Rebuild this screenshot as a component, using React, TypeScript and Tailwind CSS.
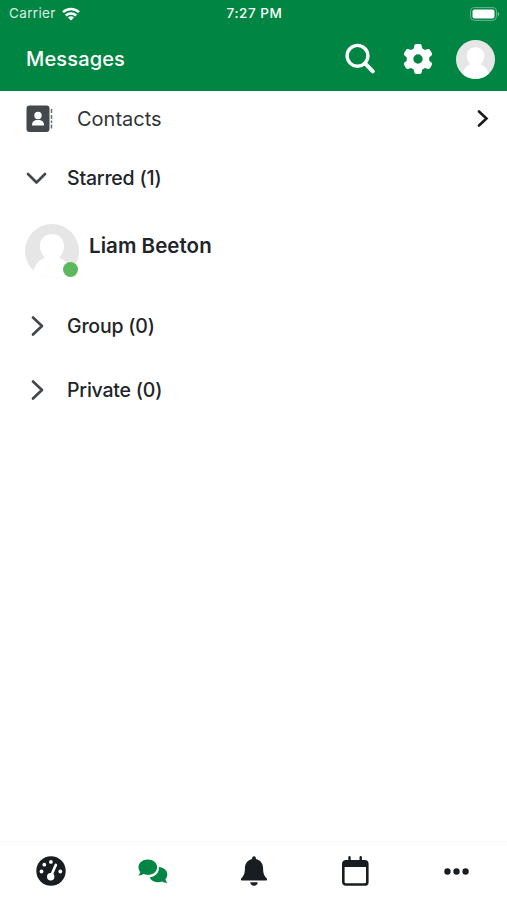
import { ReactNode } from "react";
import { FaEllipsis, FaGear } from "react-icons/fa6";

interface SectionProps {
  title: string;
  open?: boolean;
}

const StatusBar = () => {
  return (
    <div className="flex h-[27px] items-center justify-between pl-[9px] pr-[7px]">
      <div className="flex w-[180px] items-center gap-[6px]">
        <span className="text-[13.5px] leading-none tracking-[0.35px] opacity-85">Carrier</span>
        <svg width="18" height="14" viewBox="0 0 18 14" fill="none" stroke="currentColor" strokeWidth="2.5">
          <path d="M1 5.1a11.6 11.6 0 0 1 16 0" />
          <path d="M3.8 8.5a7.5 7.5 0 0 1 10.4 0" />
          <path d="M9 13.6 5.900 10.600a4.500 4.500 0 0 1 6.200 0z" fill="currentColor" stroke="none" />
        </svg>
      </div>
      <span className="text-[13.5px] font-medium leading-none tracking-[0.55px]">7:27 PM</span>
      <div className="flex w-[180px] justify-end">
        <svg width="31" height="14" viewBox="0 0 31 14">
          <rect x="1.5" y="0.6" width="26" height="12.8" rx="4" fill="none" stroke="#fff" strokeOpacity="0.4" />
          <rect x="3.5" y="2.5" width="22" height="9" rx="2" fill="#fff" />
          <path d="M28.8 5v4.2a2.3 2.3 0 0 0 0-4.2z" fill="#fff" fillOpacity="0.5" />
        </svg>
      </div>
    </div>
  );
}

const Avatar = ({ className }: { className: string }) => {
  return (
    <svg className={className} viewBox="0 0 54 54">
      <defs>
        <clipPath id="avatar">
          <circle cx="27" cy="27" r="27" />
        </clipPath>
      </defs>
      <g clipPath="url(#avatar)">
        <rect width="54" height="54" fill="#e6e6e6" />
        <path
          d="M27 10c-7.500 0-12 5-12 12 0 5 2 9 5 11.500C14 35.500 10 41 7.500 49v5h39v-5C44 41 40 35.500 34 33.500c3-2.500 5-6.500 5-11.500 0-7-4.500-12-12-12z"
          fill="#fff"
        />
      </g>
    </svg>
  );
}

const Section = ({ title, open }: SectionProps) => {
  return (
    <div className="flex h-16 items-center pl-[25px]">
      <svg
        className="text-[#44484c]"
        width="24"
        height="24"
        viewBox="0 0 24 24"
        fill="none"
        stroke="currentColor"
        strokeWidth="2.7"
        strokeLinecap="round"
        strokeLinejoin="round"
      >
        {open ? <path d="M3 8l8.500 8.500L20 8" /> : <path d="M8 3.500l9 8.500-9 8.500" />}
      </svg>
      <span className="ml-[18px] pt-[2px] text-[19.5px] font-medium tracking-[-0.2px] text-[#212529]">{title}</span>
    </div>
  );
}

const GaugeIcon = () => {
  return (
    <svg width="30" height="30" viewBox="0 0 30 30">
      <circle cx="15" cy="15" r="14.700" fill="currentColor" />
      <g fill="#fff">
        <circle cx="5.500" cy="15.500" r="1.900" />
        <circle cx="8.300" cy="8.700" r="1.900" />
        <circle cx="14.900" cy="5.900" r="1.900" />
        <circle cx="24.300" cy="15.500" r="1.900" />
        <circle cx="14.700" cy="20.700" r="3.700" />
      </g>
      <path d="M15.200 19.500l4.600-10.500" stroke="#fff" strokeWidth="2.700" strokeLinecap="round" />
    </svg>
  );
}

const ChatIcon = () => {
  return (
    <svg className="ml-[1px]" width="30" height="25" viewBox="0 0 30 25" fill="currentColor">
      <path d="M9.800 0.500c5.200 0 9.300 3.300 9.300 7.700s-4.100 7.700-9.300 7.700c-1.600 0-3-.3-4.300-.8-1.500 1-3.300 1.500-5.200 1.300 1-1 1.800-2.200 2-3.500C1 11.500.5 10 .5 8.200.5 3.800 4.600.5 9.800.5z" />
      <path d="M20.800 8c4.800.3 8.500 3.300 8.500 7.500 0 1.800-.7 3.400-1.900 4.700.3 1.500 1 2.500 2 3.600-1.900.2-3.700-.3-5.200-1.300-1.300.5-2.600.8-4 .8-3.900 0-7.200-2-8.600-4.900 5.200-.5 9.300-4.400 9.300-9.200z" />
    </svg>
  );
}

const BellIcon = () => {
  return (
    <svg width="28" height="30" viewBox="0 0 28 30" fill="currentColor">
      <path d="M14 .3c1.100 0 1.900.8 1.900 1.900v.9c4.300.9 7.200 4.400 7.200 9.100 0 5.400 1.300 7.700 3.600 10 .8.900.3 2.300-.9 2.300H2.200c-1.200 0-1.700-1.400-.9-2.300 2.300-2.300 3.600-4.600 3.600-10 0-4.700 2.900-8.200 7.200-9.100v-.9c0-1.100.8-1.900 1.900-1.900z" />
      <path d="M10.300 26.200h7.400c0 2-1.600 3.500-3.700 3.500s-3.700-1.500-3.700-3.500z" />
    </svg>
  );
}

const CalendarIcon = () => {
  return (
    <svg width="28" height="30" viewBox="0 0 28 30">
      <path d="M8.500 1.200V6M19.700 1.200V6" stroke="currentColor" strokeWidth="2.400" strokeLinecap="round" />
      <rect x="2.300" y="5.200" width="24" height="23.300" rx="2.600" fill="none" stroke="currentColor" strokeWidth="2.600" />
      <path d="M2.500 6h23.600v5H2.500z" fill="currentColor" />
    </svg>
  );
}

const Tab = ({ children, active }: { children: ReactNode, active?: boolean }) => {
  return (
    <button className={`flex flex-1 items-center justify-center ${active ? "text-[#008542]" : "text-[#181d22]"}`}>
      {children}
    </button>
  );
}

export default function App() {
  return (
    <div className="flex h-[900px] w-full flex-col bg-white font-['Inter','Liberation_Sans',sans-serif]">
      <header className="h-[91px] bg-[#008542] text-white">
        <StatusBar />
        <div className="flex h-16 items-center pl-[26px] pr-3">
          <h1 className="flex-1 text-[20px] font-medium tracking-[0.15px]">Messages</h1>
          <svg width="32" height="32" viewBox="0 0 32 32" fill="none" stroke="currentColor" strokeWidth="3.4">
            <circle cx="12.500" cy="12.800" r="10.400" />
            <path d="M20 20.300l7.800 8" strokeWidth="4" strokeLinecap="round" />
          </svg>
          <FaGear className="ml-[26px] size-[30px]" />
          <Avatar className="ml-[23px] size-[39px]" />
        </div>
      </header>

      <main className="flex-1">
        <div className="flex h-[55px] items-center pl-[26px] pr-[18px]">
          <svg width="27" height="28" viewBox="0 0 27 28" fill="#43484d">
            <rect x="0.500" y="0.500" width="23" height="26.500" rx="3" />
            <path d="M25.500 4v4.500M25.500 10v8M25.500 19.500V24" stroke="#6d7175" strokeWidth="1.500" strokeDasharray="4 1.500" />
            <circle cx="12" cy="10.500" r="3.700" fill="#fff" />
            <path d="M6 20.500c0-4 2-5.500 6-5.500s6 1.500 6 5.500z" fill="#fff" />
          </svg>
          <span className="ml-[24px] flex-1 text-[20px] text-[#303438]">Contacts</span>
          <svg width="12" height="18" viewBox="0 0 12 18" fill="none" stroke="#181b1e" strokeWidth="2.600">
            <path d="M2 1.500L9.500 8.500 2 15.500" strokeLinecap="round" />
          </svg>
        </div>
        <Section title="Starred (1)" open />
        <div className="flex h-[84px] items-start pl-[25px] pt-[14px]">
          <div className="relative">
            <Avatar className="size-[54px]" />
            <span className="absolute bottom-[1px] right-[1px] size-[15px] rounded-full bg-[#5cb85c]" />
          </div>
          <span className="ml-[10px] mt-[7px] text-[20.5px] font-semibold tracking-[0.05px] text-[#212529]">Liam Beeton</span>
        </div>
        <Section title="Group (0)" />
        <Section title="Private (0)" />
      </main>

      <nav className="flex h-[59px] border-t border-[#fafafa]">
        <Tab><GaugeIcon /></Tab>
        <Tab active><ChatIcon /></Tab>
        <Tab><BellIcon /></Tab>
        <Tab><CalendarIcon /></Tab>
        <Tab><FaEllipsis className="size-[29px]" /></Tab>
      </nav>
    </div>
  );
}
